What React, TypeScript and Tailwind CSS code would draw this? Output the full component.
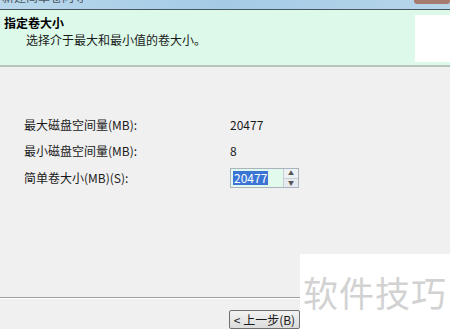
import React from "react";

const font = {
  fontFamily: '"Noto Sans CJK SC", "Noto Sans", sans-serif',
};

const rows = [
  { label: "最大磁盘空间量(MB):", value: "20477" },
  { label: "最小磁盘空间量(MB):", value: "8" },
];

const App = () => {
  return (
    <div
      className="relative flex h-[329px] w-[450px] flex-col overflow-hidden bg-[#f0f0f0] text-[12px] text-[#1a1a1a]"
      style={font}
    >
      {/* window title strip, mostly cut off */}
      <div className="relative h-[10px] overflow-hidden border-b border-[#46555e] bg-gradient-to-r from-[#b9d8ec] via-[#a4cbe6] to-[#b7d6ea]">
        <span className="absolute left-[2px] top-[-12px] text-[12px] text-[#4a5660]">
          新建简单卷向导
        </span>
        <div className="absolute right-0 top-[-6px] h-[10px] w-[36px] rounded-b-[3px] bg-[#a77a70]" />
      </div>

      {/* header */}
      <div className="flex h-[57px] justify-between border-b-2 border-[#b9c4bd] bg-[#dcf9e9]">
        <div className="pt-[5px]">
          <div className="pl-[4px] text-[12px] font-bold leading-[16px] text-black">
            指定卷大小
          </div>
          <div className="pl-[26px] text-[12px] leading-[17px]">
            选择介于最大和最小值的卷大小。
          </div>
        </div>
        <div className="mt-[5px] h-[47px] w-[35px] bg-white" />
      </div>

      {/* body */}
      <div className="flex-1 pl-[24px] pt-[45px]">
        <div className="grid grid-cols-[206px_auto] items-center">
          {rows.map((r) => (
            <React.Fragment key={r.label}>
              <div className="h-[26px] leading-[26px]">{r.label}</div>
              <div className="h-[26px] leading-[26px]">{r.value}</div>
            </React.Fragment>
          ))}
          <div className="h-[28px] leading-[28px]">简单卷大小(MB)(S):</div>
          <div className="flex h-[28px] items-center">
            <div className="flex h-[20px] w-[69px] items-stretch border border-[#a9b4bf] bg-[#e2f9ed]">
              <div className="flex flex-1 items-center pl-[2px]">
                <span className="bg-[#3a75d6] px-[1px] leading-[14px] text-white">
                  20477
                </span>
              </div>
              <div className="flex w-[15px] flex-col border-l border-[#c8cfd6]">
                <div className="flex flex-1 items-center justify-center border-b border-[#c8cfd6] bg-[#eef1f4] text-[6px] leading-none text-[#555]">
                  ▲
                </div>
                <div className="flex flex-1 items-center justify-center bg-[#e6eaee] text-[6px] leading-none text-[#555]">
                  ▼
                </div>
              </div>
            </div>
          </div>
        </div>
      </div>

      {/* footer */}
      <div className="h-[32px] border-t border-[#a0a0a0] shadow-[inset_0_1px_0_#ffffff]">
        <div className="pl-[229px] pt-[12px]">
          <button className="flex h-[19px] w-[71px] items-center justify-center rounded-[2px] border border-[#707070] bg-gradient-to-b from-[#f2f2f2] to-[#dcdcdc] text-[12px] leading-none text-[#1a1a1a]">
            &lt; 上一步(B)
          </button>
        </div>
      </div>

      {/* watermark */}
      <div className="absolute left-[300px] top-[254px] flex h-[75px] w-[150px] items-center justify-center bg-white">
        <span className="text-[35px] leading-none tracking-[1px] text-[#d2d2d2]">
          软件技巧
        </span>
      </div>
    </div>
  );
};

export default App;
